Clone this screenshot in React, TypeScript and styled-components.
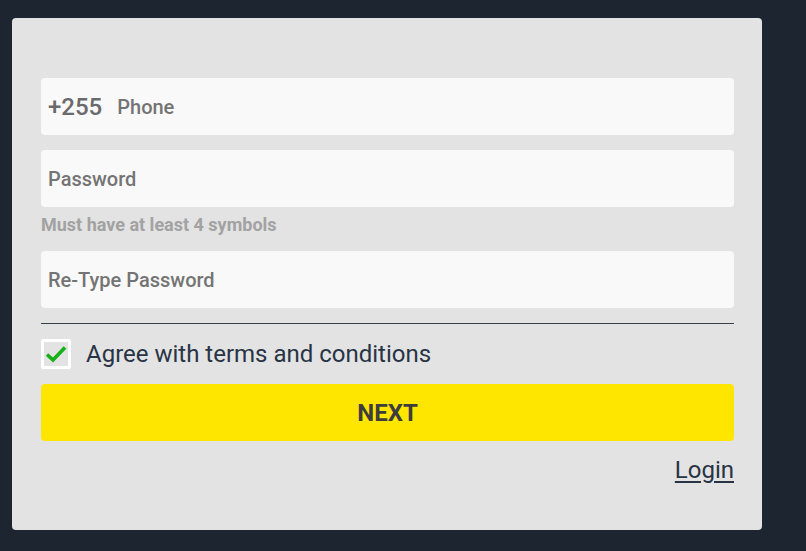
import React, { useState } from 'react'
import styled, { createGlobalStyle } from 'styled-components'

const Global = createGlobalStyle`
    html, body {
        margin: 0;
        padding: 0;
        background: #1c2530;
        font-family: Roboto, "Liberation Sans", sans-serif;
    }
`

const Page = styled.div`
    min-height: 551px;
    padding: 18px 44px 0 12px;
    box-sizing: border-box;
`

const Card = styled.form`
    width: 750px;
    height: 512px;
    box-sizing: border-box;
    background: #e3e3e3;
    border-radius: 4px;
    padding: 60px 28px 0 29px;
    display: flex;
    flex-direction: column;
`

const Field = styled.label<{ $mt?: number }>`
    display: flex;
    align-items: center;
    height: 57px;
    margin-top: ${p => p.$mt || 0}px;
    background: #f9f9f9;
    border-radius: 4px;
    padding: 0 7px;
    box-sizing: border-box;
`

const Prefix = styled.span`
    font-size: 24px;
    font-weight: 500;
    color: #6a6a6a;
    margin-right: 15px;
`

const Input = styled.input`
    flex: 1;
    border: none;
    outline: none;
    background: transparent;
    font-family: inherit;
    font-size: 20px;
    font-weight: 500;
    color: #333;
    padding: 0;
    &::placeholder {
        color: #747474;
    }
`

const Hint = styled.div`
    font-size: 18px;
    font-weight: 700;
    color: #a2a2a2;
    margin-top: 7px;
    margin-bottom: 15px;
    line-height: 22px;
`

const Divider = styled.hr`
    border: none;
    border-top: 1px solid #3b4048;
    margin: 15px 0 0;
`

const CheckRow = styled.label`
    display: flex;
    align-items: center;
    height: 30px;
    margin-top: 15px;
    gap: 15px;
    cursor: pointer;
    font-size: 24px;
    line-height: 30px;
    color: #283445;
`

const Box = styled.span`
    width: 30px;
    height: 30px;
    box-sizing: border-box;
    border: 3px solid #ffffff;
    border-radius: 2px;
    display: flex;
    align-items: center;
    justify-content: center;
`

const NextButton = styled.button`
    margin-top: 15px;
    height: 57px;
    border: none;
    border-radius: 4px;
    background: #ffe600;
    color: #3d3d3d;
    font-family: inherit;
    font-size: 24px;
    font-weight: 700;
    cursor: pointer;
`

const Footer = styled.div`
    display: flex;
    justify-content: flex-end;
    margin-top: 15px;
`

const LoginLink = styled.a`
    font-size: 24px;
    color: #283445;
    text-decoration: underline;
    text-underline-offset: 3px;
    cursor: pointer;
`

const App = () => {
    const [agree, setAgree] = useState(true)

    return (
        <Page>
            <Global />
            <Card onSubmit={e => e.preventDefault()}>
                <Field>
                    <Prefix>+255</Prefix>
                    <Input type="tel" placeholder="Phone" />
                </Field>
                <Field $mt={15}>
                    <Input type="password" placeholder="Password" />
                </Field>
                <Hint>Must have at least 4 symbols</Hint>
                <Field>
                    <Input type="password" placeholder="Re-Type Password" />
                </Field>
                <Divider />
                <CheckRow onClick={() => setAgree(!agree)}>
                    <Box>
                        {agree && (
                            <svg width="22" height="18" viewBox="0 0 22 18">
                                <path d="M2 9.5 L8 15 L20 2.5" fill="none" stroke="#17b117" strokeWidth="3.6" strokeLinejoin="miter" />
                            </svg>
                        )}
                    </Box>
                    Agree with terms and conditions
                </CheckRow>
                <NextButton type="submit">NEXT</NextButton>
                <Footer>
                    <LoginLink>Login</LoginLink>
                </Footer>
            </Card>
        </Page>
    )
}

export default App
